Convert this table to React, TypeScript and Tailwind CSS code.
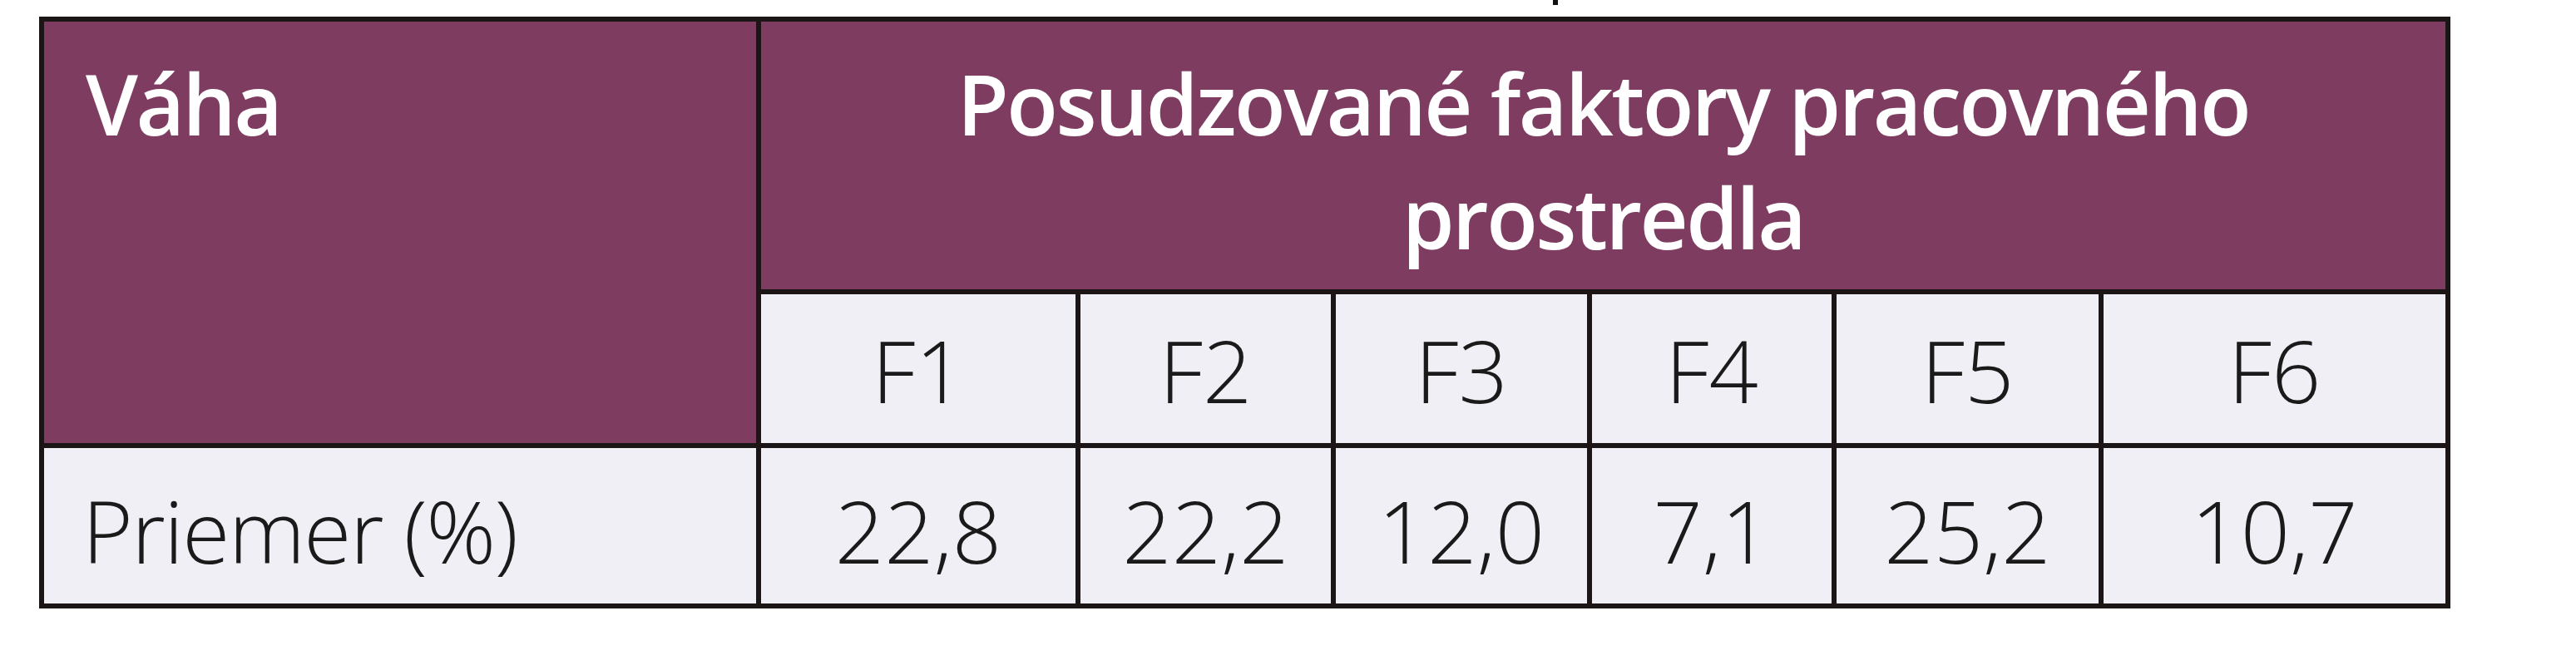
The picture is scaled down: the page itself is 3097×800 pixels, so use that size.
import React from "react";

const headFont = { fontFamily: '"Open Sans", "Liberation Sans", sans-serif' };

export default function App() {
  const fCols = ["F1", "F2", "F3", "F4", "F5", "F6"];
  const vals = ["22,8", "22,2", "12,0", "7,1", "25,2", "10,7"];
  return (
    <div className="w-[3097px] h-[800px] bg-white" style={headFont}>
      <div className="h-[20px] pl-[1867px]">
        <div className="w-[6px] h-[6px] bg-[#111]" />
      </div>
      <div className="ml-[47px] w-[2899px] grid grid-cols-[856px_378px_301px_302px_288px_315px_411px] grid-rows-[322px_179px_187px] gap-[6px] p-[6px] bg-[#1b1516]">
        <div className="row-span-2 bg-[#7e3c61] pl-[50px] pt-[30px] text-white font-semibold text-[101px] leading-[137px] tracking-[-2.5px]">
          Váha
        </div>
        <div className="col-span-6 bg-[#7e3c61] pt-[30px] text-center text-white font-semibold text-[101px] leading-[137px] tracking-[-2.5px] px-[40px]">
          Posudzované faktory pracovného
          <br />
          prostredla
        </div>
        {fCols.map((f) => (
          <div
            key={f}
            className="bg-[#f0eff6] flex items-center justify-center pt-[2px] text-[#1a1a1a] font-light text-[104px] leading-[137px]"
          >
            {f}
          </div>
        ))}
        <div className="bg-[#f0eff6] flex items-center pl-[46px] pt-[10px] text-[#1a1a1a] font-light text-[104px] leading-[137px] tracking-[-1.5px]">
          Priemer (%)
        </div>
        {vals.map((v) => (
          <div
            key={v}
            className="bg-[#f0eff6] flex items-center justify-center pt-[10px] text-[#1a1a1a] font-light text-[104px] leading-[137px]"
          >
            {v}
          </div>
        ))}
      </div>
    </div>
  );
}
